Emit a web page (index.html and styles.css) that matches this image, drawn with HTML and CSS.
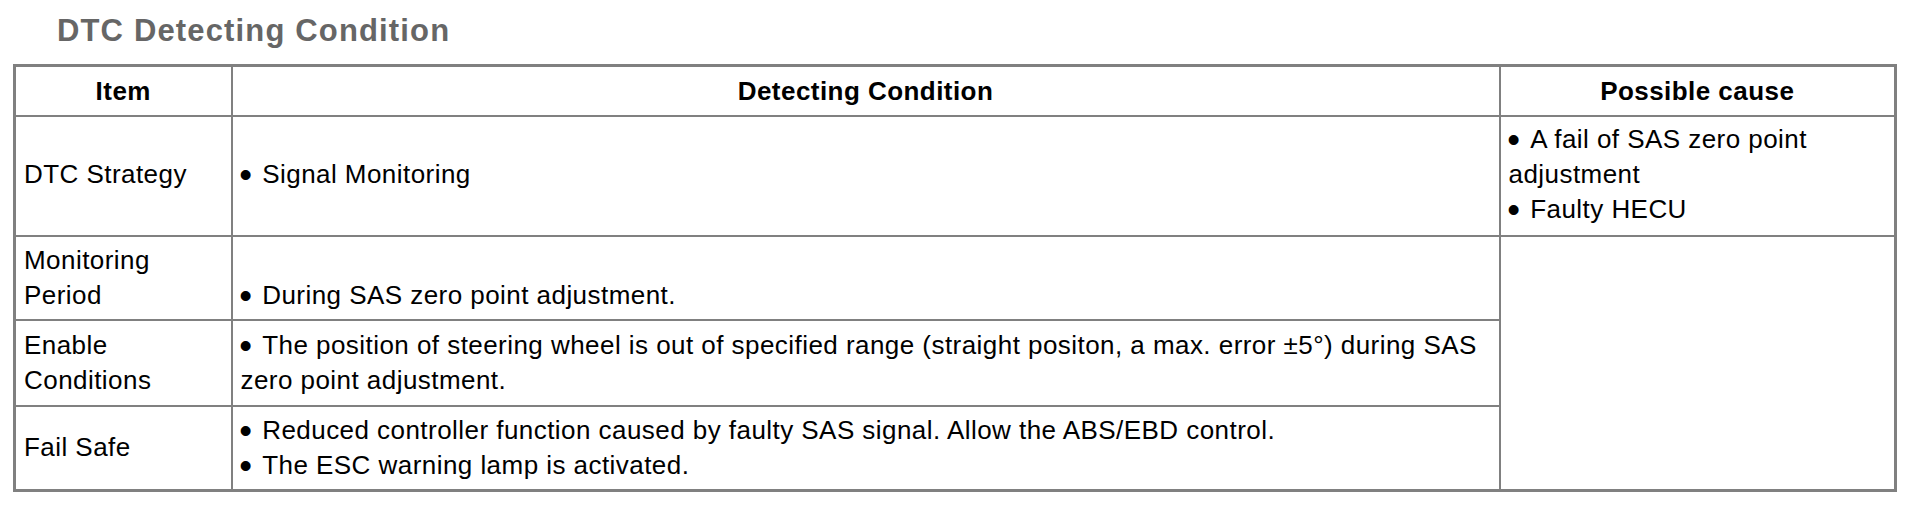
FILE: index.html
```html
<!DOCTYPE html>
<html lang="en">
<head>
<meta charset="utf-8">
<title>DTC Detecting Condition</title>
<link rel="stylesheet" href="styles.css">
</head>
<body>
<h2 class="title">DTC Detecting Condition</h2>
<table class="dtc">
  <colgroup>
    <col class="c-item">
    <col class="c-cond">
    <col class="c-cause">
  </colgroup>
  <thead>
    <tr class="r-head">
      <th>Item</th>
      <th>Detecting Condition</th>
      <th>Possible cause</th>
    </tr>
  </thead>
  <tbody>
    <tr class="r-strategy">
      <td>DTC Strategy</td>
      <td><ul class="bul"><li>Signal Monitoring</li></ul></td>
      <td><ul class="bul"><li>A fail of SAS zero point adjustment</li><li>Faulty HECU</li></ul></td>
    </tr>
    <tr class="r-period">
      <td>Monitoring Period</td>
      <td class="bottom"><ul class="bul"><li>During SAS zero point adjustment.</li></ul></td>
      <td rowspan="3"></td>
    </tr>
    <tr class="r-enable">
      <td>Enable Conditions</td>
      <td><ul class="bul"><li>The position of steering wheel is out of specified range (straight positon, a max. error ±5°) during SAS zero point adjustment.</li></ul></td>
    </tr>
    <tr class="r-fail">
      <td>Fail Safe</td>
      <td><ul class="bul"><li>Reduced controller function caused by faulty SAS signal. Allow the ABS/EBD control.</li><li>The ESC warning lamp is activated.</li></ul></td>
    </tr>
  </tbody>
</table>
</body>
</html>
```

FILE: styles.css
```css
html, body {
  margin: 0;
  padding: 0;
  background: #ffffff;
}

body {
  font-family: "Liberation Sans", Arial, sans-serif;
  color: #000;
}

.title {
  margin: 0 0 15px 0;
  padding: 13px 0 0 57px;
  font-size: 31px;
  line-height: 36px;
  font-weight: bold;
  letter-spacing: 1.15px;
  color: #666666;
}

.dtc {
  margin-left: 13px;
  width: 1881px;
  table-layout: fixed;
  border-collapse: collapse;
  border: 3px solid #808080;
  font-size: 26px;
  line-height: 35px;
  letter-spacing: 0.45px;
}

.c-item { width: 217px; }
.c-cond { width: 1268px; }
.c-cause { width: 396px; }

.dtc th,
.dtc td {
  border: 2px solid #808080;
  padding: 0 8px;
  vertical-align: middle;
  text-align: left;
  font-weight: normal;
}

.dtc th {
  text-align: center;
  font-weight: bold;
  padding-top: 2px;
}

.dtc td.bottom {
  vertical-align: bottom;
  padding-bottom: 6px;
}

.r-strategy td {
  padding-bottom: 3px;
}

.bul {
  margin: 0;
  padding: 0;
  list-style: none;
}

.bul li::before {
  content: "•";
  display: inline-block;
  line-height: 18px;
  transform: scale(1.4);
  margin-right: 12.6px;
  letter-spacing: 0;
}

.r-head { height: 50px; }
.r-strategy { height: 120px; }
.r-period { height: 84px; }
.r-enable { height: 86px; }
.r-fail { height: 85px; }
```
